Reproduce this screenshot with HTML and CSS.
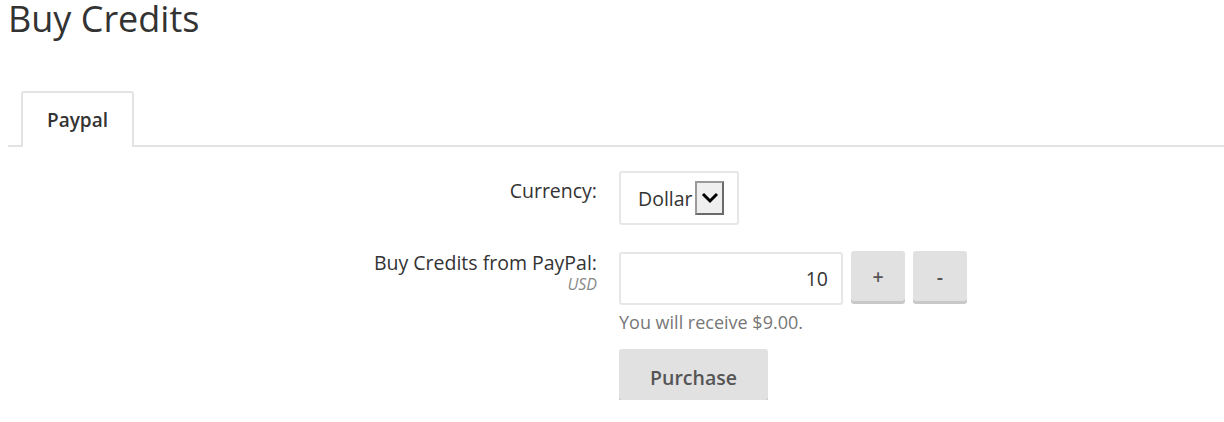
FILE: index.html
```html
<!DOCTYPE html>
<html>
<head>
<meta charset="utf-8">
<link rel="stylesheet" href="styles.css">
</head>
<body>
<h1 class="title">Buy Credits</h1>
<div class="tabs">
  <div class="tab active">Paypal</div>
</div>
<form class="form">
  <div class="row">
    <label class="label">Currency:</label>
    <div class="control">
      <span class="select-wrap">
        <select class="select"><option>Dollar</option></select>
        <span class="arrow"><svg width="18" height="12" viewBox="0 0 18 12"><path d="M2 2 L9 9 L16 2" fill="none" stroke="#000" stroke-width="3"/></svg></span>
      </span>
    </div>
  </div>
  <div class="row row2">
    <div class="label label2">
      <div>Buy Credits from PayPal:</div>
      <div class="sub">USD</div>
    </div>
    <div class="control">
      <div class="amount-line">
        <input class="amount" type="text" value="10">
        <button type="button" class="btn small">+</button>
        <button type="button" class="btn small">-</button>
      </div>
      <div class="help">You will receive $9.00.</div>
      <button type="button" class="btn purchase">Purchase</button>
    </div>
  </div>
</form>
</body>
</html>
```
FILE: styles.css
```css
html, body {
  margin: 0;
  padding: 0;
  background: #fff;
}
body {
  padding: 0 0 0 8px;
  font-family: "Open Sans", "DejaVu Sans", sans-serif;
  color: #333;
}
.title {
  margin: 0;
  padding-top: 0;
  font-size: 36px;
  line-height: 38px;
  font-weight: 400;
  color: #333;
}
.tabs {
  margin-top: 53px;
  border-bottom: 2px solid #e3e3e3;
  display: flex;
  padding-left: 13px;
}
.tab {
  border: 2px solid #e3e3e3;
  border-bottom: none;
  border-radius: 3px 3px 0 0;
  padding: 0 24px;
  height: 54px;
  line-height: 54px;
  font-size: 19px;
  font-weight: 600;
  color: #333;
  margin-bottom: -2px;
  background: #fff;
}
.form {
  padding-top: 24px;
}
.row {
  display: grid;
  grid-template-columns: 589px auto;
  column-gap: 22px;
}
.row2 {
  margin-top: 26px;
}
.label {
  text-align: right;
  font-size: 19.5px;
  line-height: 26px;
  padding-top: 7px;
  color: #333;
}
.label2 {
  padding-top: 1px;
  line-height: 22px;
}
.sub {
  font-size: 16px;
  font-style: italic;
  color: #888;
  line-height: 16px;
  margin-top: 2px;
}
.select-wrap {
  position: relative;
  display: inline-block;
}
.select {
  -webkit-appearance: none;
  appearance: none;
  width: 120px;
  height: 54px;
  border: 2px solid #e6e6e6;
  border-radius: 3px;
  background: #fff;
  font-family: inherit;
  font-size: 19.5px;
  color: #333;
  padding: 0 0 0 17px;
  margin: 0;
}
.arrow {
  position: absolute;
  left: 76px;
  top: 10px;
  width: 25px;
  height: 30px;
  background: #efefef;
  border: 2px solid #7a7a7a;
  border-color: #9a9a9a #6a6a6a #6a6a6a #9a9a9a;
  display: flex;
  align-items: center;
  justify-content: center;
  pointer-events: none;
}
.amount-line {
  display: flex;
  gap: 8px;
  align-items: flex-start;
}
.amount {
  box-sizing: border-box;
  width: 224px;
  height: 53px;
  margin: 1px 0 0 0;
  border: 2px solid #e6e6e6;
  border-radius: 3px;
  font-family: inherit;
  font-size: 19.5px;
  color: #333;
  text-align: right;
  padding: 0 13px 0 0;
}
.btn {
  box-sizing: border-box;
  border: none;
  border-radius: 3px;
  background: #e1e1e1;
  box-shadow: 0 3px 0 #c8c8c8;
  font-family: inherit;
  font-weight: 600;
  color: #555;
  cursor: pointer;
  padding: 0;
}
.small {
  width: 54px;
  height: 50px;
  font-size: 19.5px;
}
.help {
  margin-top: 5px;
  font-size: 18px;
  line-height: 24px;
  color: #777;
}
.purchase {
  margin-top: 15px;
  width: 149px;
  height: 51px;
  padding-top: 5px;
  font-size: 19.5px;
}
```
